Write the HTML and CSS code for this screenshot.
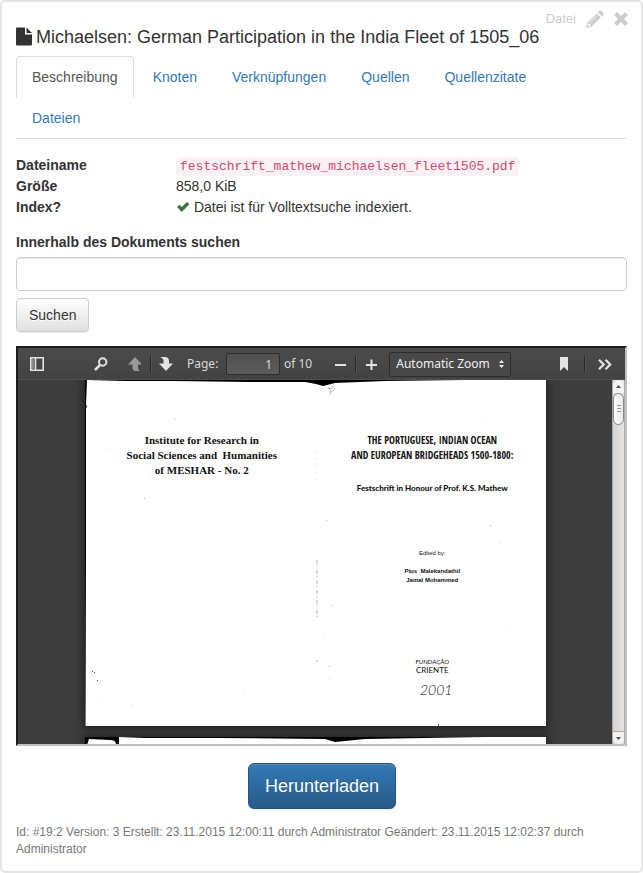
FILE: index.html
```html
<!DOCTYPE html>
<html lang="de">
<head>
<meta charset="utf-8">
<meta name="viewport" content="width=device-width, initial-scale=1">
<title>Michaelsen: German Participation in the India Fleet of 1505_06</title>
<link rel="stylesheet" href="styles.css">
</head>
<body>
<main class="card">
  <header class="card-header">
    <h1 class="title">
      <svg class="file-icon" viewBox="0 0 16 19" aria-hidden="true"><path fill="#333" d="M0 1.5Q0 .5 1 .5H9V7.5H16V17.5Q16 18.500 15 18.500H1Q0 18.500 0 17.500ZM10.500.500 16 6H10.500Z"/></svg>
      <span>Michaelsen: German Participation in the India Fleet of 1505_06</span>
    </h1>
    <div class="actions">
      <span>Datei</span>
      <button class="icon-button" type="button" aria-label="Bearbeiten"><svg width="18" height="18" viewBox="0 0 18 18" aria-hidden="true"><path fill="#ccc" d="M13.200.800Q14.200-.200 15.200.800L17.200 2.800Q18.200 3.800 17.200 4.800L15.800 6.200 11.800 2.200ZM10.800 3.200 14.800 7.200 5.300 16.700 0 18 1.300 12.700ZM2.300 13.500 1.700 16.300 4.500 15.700 4.200 13.900Z"/><path stroke="#fff" stroke-width=".8" d="M4 12.300 11.300 5"/></svg></button>
      <button class="icon-button" type="button" aria-label="Schließen"><svg width="14" height="14" viewBox="0 0 14 14" aria-hidden="true"><path fill="#ccc" d="M3 0 7 4 11 0 14 3 10 7 14 11 11 14 7 10 3 14 0 11 4 7 0 3Z"/></svg></button>
    </div>
  </header>

  <nav class="tabs">
    <a class="tab active" href="#beschreibung">Beschreibung</a>
    <a class="tab" href="#knoten">Knoten</a>
    <a class="tab" href="#verknuepfungen">Verknüpfungen</a>
    <a class="tab" href="#quellen">Quellen</a>
    <a class="tab" href="#quellenzitate">Quellenzitate</a>
    <a class="tab" href="#dateien">Dateien</a>
  </nav>

  <dl class="details">
    <dt>Dateiname</dt><dd><code>festschrift_mathew_michaelsen_fleet1505.pdf</code></dd>
    <dt>Größe</dt><dd>858,0 KiB</dd>
    <dt>Index?</dt><dd><svg width="14" height="10" viewBox="0 0 14 10" aria-hidden="true"><path fill="#3c763d" d="M1 5 3.300 2.700 5.700 5 11 0 13.300 2.200 5.800 10Z"/></svg> Datei ist für Volltextsuche indexiert.</dd>
  </dl>

  <form class="search">
    <label for="query">Innerhalb des Dokuments suchen</label>
    <input id="query" type="text">
    <button type="button">Suchen</button>
  </form>

  <section class="viewer">
    <div class="toolbar">
      <button class="tool sidebar-toggle" type="button" aria-label="Toggle Sidebar"><svg width="14" height="14" viewBox="0 0 14 14" aria-hidden="true"><path fill="none" stroke="#e4e4e4" stroke-width="1.600" d="M.8.800H13.200V13.200H.8ZM5.500 1V13"/><path fill="#888" d="M2 2H4V12H2Z"/></svg></button>
      <button class="tool find" type="button" aria-label="Find"><svg width="14" height="14" viewBox="0 0 14 14" aria-hidden="true"><circle cx="8.700" cy="5" r="3.700" fill="none" stroke="#e4e4e4" stroke-width="2"/><path stroke="#e4e4e4" stroke-width="2.500" d="M6 8 1 13"/></svg></button>
      <button class="tool" type="button" aria-label="Previous Page"><svg width="14" height="14" viewBox="0 0 14 14" aria-hidden="true"><path fill="#999" d="M7 0 14 7.500H10V11Q10 13 12 14H7Q4.500 13.500 4.500 11V7.500H0Z"/></svg></button>
      <span class="divider"></span>
      <button class="tool" type="button" aria-label="Next Page"><svg width="14" height="14" viewBox="0 0 14 14" aria-hidden="true"><path fill="#e4e4e4" d="M7 14 0 6.500H4.500V4Q4.500 1.500 1 0H6.500Q10 .5 10 4V6.500H14Z"/></svg></button>
      <label class="page-label" for="page">Page:</label>
      <input id="page" class="page-number" type="text" value="1">
      <span class="page-count">of 10</span>
      <button class="tool zoom-out" type="button" aria-label="Zoom Out"><svg width="11" height="11" viewBox="0 0 11 11" aria-hidden="true"><path fill="#e4e4e4" d="M0 5H11V7H0Z"/></svg></button>
      <span class="divider"></span>
      <button class="tool" type="button" aria-label="Zoom In"><svg width="11" height="11" viewBox="0 0 11 11" aria-hidden="true"><path fill="#e4e4e4" d="M0 5H4.500V.5H6.500V5H11V7H6.500V11H4.500V7H0Z"/></svg></button>
      <span class="zoom">
        <select aria-label="Zoom"><option>Automatic Zoom</option></select>
        <svg class="zoom-arrows" width="5" height="8" viewBox="0 0 5 8" aria-hidden="true"><path fill="#eee" d="M0 3 2.500 0 5 3ZM0 5 2.500 8 5 5Z"/></svg>
      </span>
      <button class="tool bookmark" type="button" aria-label="Current View"><svg width="8" height="14" viewBox="0 0 8 14" aria-hidden="true"><path fill="#e4e4e4" d="M0 0H8V14L4 10 0 14Z"/></svg></button>
      <span class="divider wide"></span>
      <button class="tool" type="button" aria-label="Tools"><svg width="14" height="11" viewBox="0 0 14 11" aria-hidden="true"><path fill="none" stroke="#e4e4e4" stroke-width="2.200" d="M1 .8 5.700 5.500 1 10.200M7.500.800 12.200 5.500 7.500 10.200"/></svg></button>
    </div>
    <div class="viewer-body">
      <div class="pages">
        <article class="scan">
          <svg class="marks" viewBox="0 0 461 346" preserveAspectRatio="none" aria-hidden="true">
            <path d="M0 0H2L1 25 2 26 1 28 1 180 .5 346H0ZM2 0H380L300 1 250 3 238 6 231 4 220 2 165 2 90 1 40 1Z"/>
            <g fill="none" stroke="#777" stroke-width=".7"><path d="M244 9 248 7 250 9 247 12 244 10M246 12 244 15M243 8 247 9" stroke-dasharray="2 1"/><path d="M232 71V100" stroke="#ddd" stroke-dasharray="2 5"/><path d="M232 180V240M232 280V282" stroke="#999" stroke-dasharray="4 2 1 3"/></g>
            <path fill="#555" d="M7 291h1v1h-1ZM9 292h1v1h-1ZM12 300h1v1h-1ZM353 344h1v2h-1Z"/>
            <path fill="#aaa" d="M89 39h1v1h-1ZM405 145h1v1h-1ZM247 225h1v1h-1ZM241 140h1v1h-1ZM59 118h1v1h-1ZM244 286h1v1h-1Z"/>
            <path fill="#ddd" d="M21 68h1v1h-1ZM187 70h1v1h-1ZM400 39h1v1h-1ZM267 112h1v2h-1ZM414 163h1v1h-1ZM420 247h1v1h-1ZM238 257h1v1h-1ZM244 299h1v1h-1ZM17 320h1v1h-1ZM158 310h1v1h-1ZM46 325h1v1h-1Z"/>
          </svg>
          <div class="leaf">
            <p class="institute">Institute for Research in<br>Social Sciences and&nbsp; Humanities<br>of MESHAR - No. 2</p>
          </div>
          <div class="leaf">
            <h2 class="book-title">THE PORTUGUESE, INDIAN OCEAN<br>AND EUROPEAN BRIDGEHEADS 1500-1800:</h2>
            <p class="subtitle">Festschrift in Honour of Prof. K.S. Mathew</p>
            <p class="edited">Edited by:</p>
            <p class="editors">Pius&nbsp; Malekandathil<br>Jamal Mohammed</p>
            <p class="publisher"><span>FUNDAÇÃO</span><br>CRIENTE</p>
            <p class="year">2001</p>
          </div>
        </article>
        <article class="scan next">
          <svg class="marks" viewBox="0 0 461 346" preserveAspectRatio="none" aria-hidden="true"><path d="M0 0H34V7H31Q31 3 25 3L4 2 2 8H0ZM34 0H400L280 2 250 5 240 2 130 1 60 1Z"/></svg>
        </article>
      </div>
      <div class="scrollbar" aria-hidden="true">
        <span class="scroll-end up"><svg width="5" height="3" viewBox="0 0 5 3"><path fill="#555" d="M0 3 2.500 0 5 3Z"/></svg></span>
        <span class="thumb"><svg width="4" height="8" viewBox="0 0 4 8"><path stroke="#999" d="M0 .5H4M0 3.500H4M0 6.500H4"/></svg></span>
        <span class="scroll-end down"><svg width="5" height="3" viewBox="0 0 5 3"><path fill="#555" d="M0 0 2.500 3 5 0Z"/></svg></span>
      </div>
    </div>
  </section>

  <a class="download" href="#download">Herunterladen</a>
  <footer class="meta">Id: #19:2 Version: 3 Erstellt: 23.11.2015 12:00:11 durch Administrator Geändert: 23.11.2015 12:02:37 durch Administrator</footer>
</main>
</body>
</html>
```
FILE: styles.css
```css
* { box-sizing: border-box; }

body {
  margin: 0;
  background: #fff;
  color: #333;
  font: 14px/20px "Liberation Sans", Arial, sans-serif;
}

h1, h2, p, dl, dd { margin: 0; }
button, input, select { font: inherit; color: inherit; margin: 0; }

.card {
  display: flex;
  flex-direction: column;
  padding: 7px 13px 13px 14px;
  border: 2px solid #e5e5e5;
  border-radius: 5px;
}
.tabs, .search, .viewer { margin-right: 1px; }

/* Header */
.card-header { display: flex; justify-content: space-between; align-items: flex-start; }
.title {
  display: flex;
  gap: 4px;
  padding-top: 17px;
  font-size: 18px;
  font-weight: 400;
  line-height: 22px;
}
.file-icon { flex: none; width: 16px; height: 19px; margin-top: 1px; }
.actions {
  display: flex;
  align-items: center;
  gap: 10px;
  height: 20px;
  color: #ccc;
  font-size: 13px;
}
.icon-button { display: flex; padding: 0; border: 0; background: none; }

/* Tabs */
.tabs {
  display: flex;
  flex-wrap: wrap;
  gap: 0 3px;
  margin-top: 8px;
  padding-right: 16px;
  border-bottom: 1px solid #ddd;
}
.tab {
  margin-bottom: -1px;
  padding: 10px 15px;
  border: 1px solid transparent;
  border-radius: 4px 4px 0 0;
  color: #337ab7;
  text-decoration: none;
}
.tab.active { border-color: #ddd #ddd transparent; color: #555; }

/* File details */
.details {
  display: grid;
  grid-template-columns: 160px 1fr;
  row-gap: 1px;
  margin-top: 16px;
}
.details dt { font-weight: 700; }
code {
  padding: 2px 4px;
  border-radius: 4px;
  background: #f9f2f4;
  color: #d14a70;
  font: 13px/16px "Liberation Mono", monospace;
}

/* Search form */
.search { display: flex; flex-direction: column; margin-top: 15px; }
.search label { font-weight: 700; }
.search input {
  width: 100%;
  height: 34px;
  margin: 5px 0 7px;
  padding: 6px 12px;
  border: 1px solid #ccc;
  border-radius: 4px;
  box-shadow: inset 0 1px 1px rgba(0, 0, 0, .08);
}
.search button {
  align-self: flex-start;
  padding: 6px 12px;
  border: 1px solid #ccc;
  border-radius: 4px;
  background: linear-gradient(#fff, #e0e0e0);
  box-shadow: inset 0 1px 0 rgba(255, 255, 255, .15), 0 1px 1px rgba(0, 0, 0, .08);
  text-shadow: 0 1px 0 #fff;
}

/* Document viewer */
.viewer {
  display: flex;
  flex-direction: column;
  height: 400px;
  margin-top: 14px;
  border: 2px solid;
  border-color: #1c1c1c #c0c0c0 #c0c0c0 #1c1c1c;
  background: #3d3d3d;
  overflow: hidden;
}
.toolbar {
  display: flex;
  flex: none;
  align-items: center;
  height: 32px;
  padding: 0 6px 0 5px;
  background: linear-gradient(#4b4b4b, #424242);
  box-shadow: inset 0 -1px 0 #505050;
  color: #d9d9d9;
  font: 12px/14px "Noto Sans", "Open Sans", sans-serif;
}
.tool {
  display: flex;
  flex: none;
  align-items: center;
  justify-content: center;
  width: 28px;
  height: 24px;
  padding: 0;
  border: 0;
  background: none;
}
.find { margin: 0 6px 0 36px; }
.divider { flex: none; width: 1px; height: 16px; margin: 0 1px; background: #262626; box-shadow: 1px 0 0 #555; }
.divider.wide { margin: 0 6px; }
.page-label { width: 32px; margin: 0 7px; }
.page-number {
  width: 54px;
  height: 22px;
  padding: 0 7px;
  border: 1px solid #2c2c2c;
  border-radius: 2px;
  background: linear-gradient(#505050, #5c5c5c);
  text-align: right;
}
.page-count { margin-left: 4px; white-space: nowrap; }
.zoom-out { margin-left: 14px; }
.zoom { position: relative; margin-left: 4px; color: #f0f0f0; }
.zoom select {
  display: block;
  width: 122px;
  height: 25px;
  padding: 0 6px;
  border: 1px solid #2c2c2c;
  border-radius: 2px;
  background: #484848;
  appearance: none;
}
.zoom-arrows { position: absolute; top: 8px; right: 7px; pointer-events: none; }
.bookmark { margin-left: auto; }

.viewer-body { display: flex; flex: 1; min-height: 0; }
.pages {
  display: flex;
  flex: 1;
  flex-direction: column;
  align-items: center;
  gap: 11px;
  min-width: 0;
  overflow: hidden;
}
.scan {
  position: relative;
  display: flex;
  flex: none;
  width: 77%;
  min-width: 461px;
  height: 346px;
  background: #fff;
  color: #111;
  box-shadow: 0 0 8px 2px #222;
}
.marks { position: absolute; inset: 0; width: 100%; height: 100%; }
.leaf { flex: 1; padding: 53px 0 0 4px; text-align: center; }
.institute { font: 700 11px/15px "Liberation Serif", serif; }
.book-title { font: 700 10px/15px "Liberation Sans Narrow", "Open Sans Condensed", "Lato", sans-serif; }
.subtitle { margin-top: 18px; font: 900 8px/15px Lato, sans-serif; }
.edited { margin-top: 53px; font: 6px/9px "Liberation Sans", sans-serif; }
.editors { margin-top: 9px; font: 700 6px/9px "Liberation Sans", sans-serif; }
.publisher { margin-top: 72px; font: 8px/8px Lato, sans-serif; }
.publisher span { font-size: 6px; }
.year { margin-top: 6px; padding-left: 8px; font: italic 300 14px/20px Lato, sans-serif; }

.scrollbar {
  display: flex;
  flex: none;
  flex-direction: column;
  width: 13px;
  border: solid #aaa;
  border-width: 0 1px;
  background: linear-gradient(90deg, #d4d2d0, #e6e5e3);
}
.scroll-end, .thumb { display: flex; align-items: center; justify-content: center; background: #f3f3f3; }
.scroll-end { height: 13px; }
.up { border-radius: 6px 6px 0 0; }
.down { margin-top: auto; border-radius: 0 0 6px 6px; border-top: 1px solid #aaa; }
.thumb { height: 32px; border: 1px solid #888; border-radius: 6px; background: linear-gradient(90deg, #fff, #e8e8e8); }

/* Download and metadata */
.download {
  align-self: center;
  margin-top: 17px;
  padding: 10px 16px;
  border: 1px solid #245580;
  border-radius: 6px;
  background: linear-gradient(#337ab7, #265a88);
  box-shadow: inset 0 1px 0 rgba(255, 255, 255, .15), 0 1px 1px rgba(0, 0, 0, .08);
  color: #fff;
  font-size: 18px;
  line-height: 24px;
  text-decoration: none;
  text-shadow: 0 -1px 0 rgba(0, 0, 0, .2);
}
.meta { margin-top: 15px; color: #777; font-size: 12px; line-height: 17px; }
```
